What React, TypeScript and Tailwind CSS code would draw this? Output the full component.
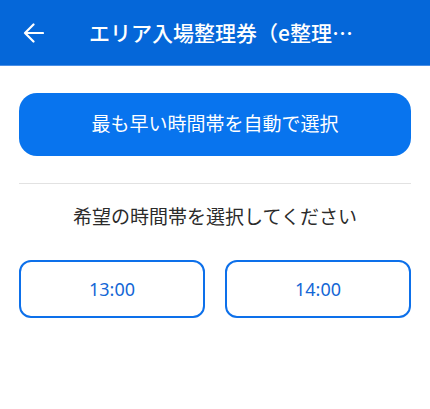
import React from 'react';

const font = { fontFamily: '"Noto Sans", "Noto Sans CJK JP", sans-serif' };
const cjkFont = { fontFamily: '"Noto Sans CJK JP", "Noto Sans", sans-serif' };

const BackArrow: React.FC = () => (
  <svg width="21" height="20" viewBox="0 0 21 20" fill="none" aria-hidden="true">
    <path d="M20 10H2M10.5 1.5L2 10l8.5 8.5" stroke="white" strokeWidth="2.2" strokeLinecap="round" strokeLinejoin="round" />
  </svg>
);

const TimeButton: React.FC<{ label: string }> = ({ label }) => (
  <button className="h-[58px] rounded-[12px] border-2 border-[#0d70ea] bg-white text-[18px] text-[#1467d6]">
    {label}
  </button>
);

const App: React.FC = () => {
  const slots = ['13:00', '14:00'];

  return (
    <div className="w-[430px] h-[409px] bg-white" style={font}>
      <header className="h-[65px] bg-[#0567d9] flex items-center pl-[23px] shadow-[0_1px_0_#4a8fe6]">
        <BackArrow />
        <h1 className="ml-[45px] whitespace-nowrap text-[21px] font-medium text-white leading-none" style={cjkFont}>
          エリア入場整理券（e整理…
        </h1>
      </header>

      <main className="px-[19px]">
        <button className="mt-[28px] w-full h-[63px] rounded-[18px] bg-[#0874ee] text-white text-[19px]">
          最も早い時間帯を自動で選択
        </button>

        <div className="mt-[27px] h-px bg-[#e2e2e2]" />

        <p className="mt-[19px] text-center text-[19px] leading-[28px] text-[#2b2b2b]">
          希望の時間帯を選択してください
        </p>

        <div className="mt-[29px] grid grid-cols-2 gap-5">
          {slots.map(s => (
            <TimeButton key={s} label={s} />
          ))}
        </div>
      </main>
    </div>
  );
};

export default App;
